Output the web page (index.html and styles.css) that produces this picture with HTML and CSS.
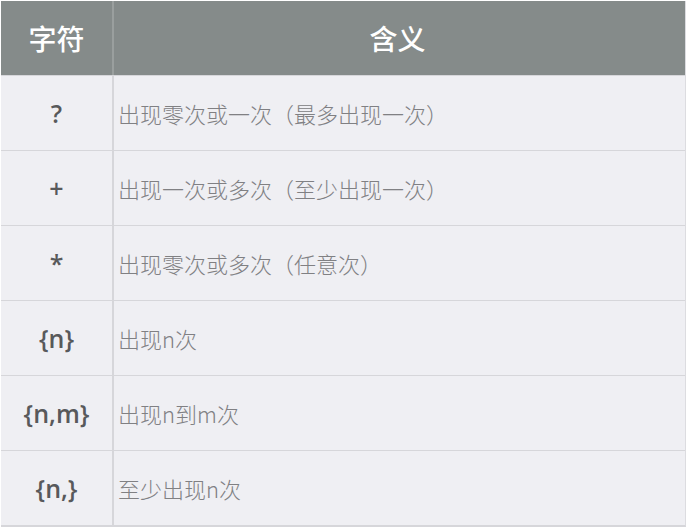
FILE: index.html
```html
<!DOCTYPE html>
<html lang="zh">
<head>
<meta charset="utf-8">
<link rel="stylesheet" href="styles.css">
</head>
<body>
<div class="table">
  <div class="row head">
    <div class="c1">字符</div>
    <div class="c2">含义</div>
  </div>
  <div class="row">
    <div class="c1">?</div>
    <div class="c2">出现零次或一次（最多出现一次）</div>
  </div>
  <div class="row">
    <div class="c1">+</div>
    <div class="c2">出现一次或多次（至少出现一次）</div>
  </div>
  <div class="row">
    <div class="c1">*</div>
    <div class="c2">出现零次或多次（任意次）</div>
  </div>
  <div class="row">
    <div class="c1">{n}</div>
    <div class="c2">出现n次</div>
  </div>
  <div class="row">
    <div class="c1">{n,m}</div>
    <div class="c2">出现n到m次</div>
  </div>
  <div class="row">
    <div class="c1">{n,}</div>
    <div class="c2">至少出现n次</div>
  </div>
</div>
</body>
</html>
```
FILE: styles.css
```css
html, body {
  margin: 0;
  padding: 0;
  background: #ffffff;
}
body {
  font-family: "Noto Sans CJK SC", "Noto Sans", sans-serif;
  padding: 1px 2px 0 1px;
  width: 688px;
  height: 528px;
  box-sizing: border-box;
}
.table {
  display: flex;
  flex-direction: column;
  border-right: 1px solid #dcdce0;
  border-bottom: 2px solid #d6d6da;
  background: #efeff3;
}
.row {
  display: grid;
  grid-template-columns: 113px 1fr;
  height: 74px;
  border-top: 1px solid #d6d6da;
}
.row.head {
  height: 74px;
  border-top: none;
  background: #858b8a;
  color: #ffffff;
}
.row > div {
  display: flex;
  align-items: center;
}
.c1 {
  justify-content: center;
  border-right: 2px solid #d6d6da;
  font-family: "Open Sans", "Noto Sans", sans-serif;
  font-size: 25px;
  font-weight: 600;
  color: #58595b;
}
.c2 {
  padding-left: 4px;
  font-size: 22px;
  font-weight: 300;
  color: #808083;
}
.head .c1 {
  border-right: 2px solid #9a9f9e;
  font-family: "Noto Sans CJK SC", sans-serif;
  font-size: 28px;
  font-weight: 500;
  color: #fff;
}
.head .c2 {
  justify-content: center;
  padding-left: 0;
  padding-right: 4px;
  font-size: 28px;
  font-weight: 500;
  color: #fff;
}
```
